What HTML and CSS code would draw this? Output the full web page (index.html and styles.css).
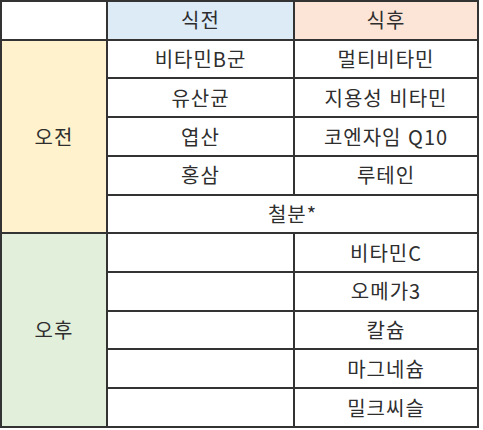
FILE: index.html
```html
<!DOCTYPE html>
<html lang="ko">
<head>
<meta charset="utf-8">
<link rel="stylesheet" href="styles.css">
</head>
<body>
<table class="sched">
  <colgroup>
    <col class="c1"><col class="c2"><col class="c3">
  </colgroup>
  <tr>
    <td></td>
    <td class="before">식전</td>
    <td class="after">식후</td>
  </tr>
  <tr>
    <td class="am" rowspan="5">오전</td>
    <td>비타민B군</td>
    <td>멀티비타민</td>
  </tr>
  <tr><td>유산균</td><td>지용성 비타민</td></tr>
  <tr><td>엽산</td><td>코엔자임 Q10</td></tr>
  <tr><td>홍삼</td><td>루테인</td></tr>
  <tr><td colspan="2">철분*</td></tr>
  <tr>
    <td class="pm" rowspan="5">오후</td>
    <td></td>
    <td>비타민C</td>
  </tr>
  <tr><td></td><td>오메가3</td></tr>
  <tr><td></td><td>칼슘</td></tr>
  <tr><td></td><td>마그네슘</td></tr>
  <tr><td></td><td>밀크씨슬</td></tr>
</table>
</body>
</html>
```

FILE: styles.css
```css
html, body {
  margin: 0;
  padding: 0;
  background: #ffffff;
}

.sched {
  border-collapse: collapse;
  width: 479px;
  height: 428px;
  table-layout: fixed;
  font-family: "Noto Sans CJK KR", "Noto Sans", sans-serif;
  font-size: 20px;
  font-weight: 400;
  color: #2e2e2e;
}

.c1 { width: 106px; }
.c2 { width: 187px; }
.c3 { width: 184px; }

.sched td {
  border: 2px solid #333333;
  text-align: center;
  vertical-align: middle;
  padding: 0;
  height: 36px;
  line-height: 1.2;
  letter-spacing: 1px;
}

.sched .before { background: #ddebf7; }
.sched .after { background: #fce4d6; }
.sched .am { background: #fff2cc; }
.sched .pm { background: #e2efda; }
```
